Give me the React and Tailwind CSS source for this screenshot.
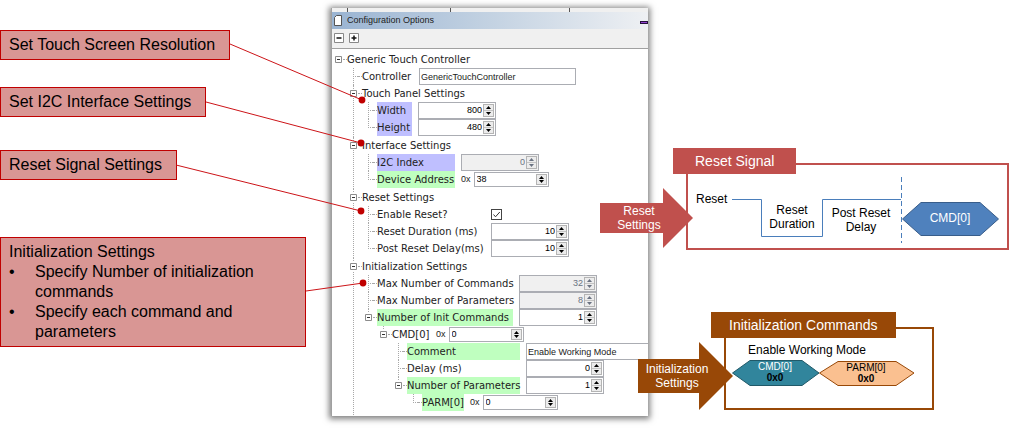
const notes = [
  { text: "Set Touch Screen Resolution", className: "" },
  { text: "Set I2C Interface Settings", className: "mt-[27px]" },
  { text: "Reset Signal Settings", className: "mt-[33px]" },
  {
    text: "Initialization Settings",
    className: "mt-[57px] max-w-[306px]",
    items: [
      "Specify Number of initialization commands",
      "Specify each command and parameters",
    ],
  },
];

const connectors = [
  { x1: 230, y1: 44, x2: 362, y2: 100 },
  { x1: 206, y1: 102, x2: 361, y2: 143 },
  { x1: 176, y1: 165, x2: 361, y2: 211 },
  { x1: 306, y1: 291, x2: 363, y2: 283 },
];

const tree = [
  {
    label: "Generic Touch Controller",
    children: [
      { label: "Controller", field: "text", value: "GenericTouchController", col: "w-[51px]" },
      {
        label: "Touch Panel Settings",
        children: [
          { label: "Width", field: "spin", value: "800", col: "w-[35px]", tone: "blue" },
          { label: "Height", field: "spin", value: "480", col: "w-[35px]", tone: "blue" },
        ],
      },
      {
        label: "Interface Settings",
        children: [
          { label: "I2C Index", field: "spin", value: "0", col: "w-[78px]", tone: "blue", disabled: true },
          { label: "Device Address", field: "hex", value: "38", col: "w-[78px]", tone: "green" },
        ],
      },
      {
        label: "Reset Settings",
        children: [
          { label: "Enable Reset?", field: "check", col: "w-[108px]" },
          { label: "Reset Duration (ms)", field: "spin", value: "10", col: "w-[108px]" },
          { label: "Post Reset Delay(ms)", field: "spin", value: "10", col: "w-[108px]" },
        ],
      },
      {
        label: "Initialization Settings",
        open: true,
        children: [
          { label: "Max Number of Commands", field: "spin", value: "32", col: "w-[136px]", disabled: true },
          { label: "Max Number of Parameters", field: "spin", value: "8", col: "w-[136px]", disabled: true },
          {
            label: "Number of Init Commands",
            field: "spin",
            value: "1",
            col: "w-[136px]",
            tone: "green",
            children: [
              {
                label: "CMD[0]",
                field: "hex",
                value: "0",
                col: "w-[38px]",
                children: [
                  { label: "Comment", field: "wide", value: "Enable Working Mode", col: "w-[113px]", tone: "green" },
                  { label: "Delay (ms)", field: "spin", value: "0", col: "w-[113px]" },
                  {
                    label: "Number of Parameters",
                    field: "spin",
                    value: "1",
                    col: "w-[113px]",
                    tone: "green",
                    children: [
                      { label: "PARM[0]", field: "hex", value: "0", col: "w-[42px]", tone: "green" },
                    ],
                  },
                ],
              },
            ],
          },
        ],
      },
    ],
  },
];

const tones = { blue: "bg-[#bfbfff]", green: "bg-[#bfffbf]" };

function Note({ text, items, className }) {
  return (
    <div
      className={`w-fit border border-[#c00000] bg-[#d99694] py-1 pl-2 pr-[14px] text-[16px] leading-5 ${className}`}
    >
      <p>{text}</p>
      {items && (
        <ul>
          {items.map((item) => (
            <li key={item} className="flex">
              <span className="w-[26px] shrink-0">•</span>
              <span>{item}</span>
            </li>
          ))}
        </ul>
      )}
    </div>
  );
}

function Connectors() {
  return (
    <svg className="pointer-events-none absolute left-0 top-0 z-10 overflow-visible" width="331" height="400" aria-hidden="true">
      {connectors.map((c) => (
        <g key={c.y1}>
          <line x1={c.x1} y1={c.y1} x2={c.x2} y2={c.y2} stroke="#cc1418" strokeWidth="1" />
          <circle cx={c.x2} cy={c.y2} r="3.4" fill="#c00000" />
        </g>
      ))}
    </svg>
  );
}

function Spinner({ id, value, disabled, hex }) {
  return (
    <span
      className={`flex shrink-0 border border-[#abadb3] p-px ${hex ? "h-[15px] w-[75px]" : "h-[17px] w-[78px]"} ${
        disabled ? "bg-[#f0f0f0] text-gray-500" : "bg-white text-black"
      }`}
    >
      <input
        id={id}
        defaultValue={value}
        disabled={disabled}
        className={`min-w-0 flex-1 bg-transparent px-px outline-none ${hex ? "text-left" : "text-right"}`}
      />
      <span className="flex w-[11px] flex-col border border-[#b4b4b4] bg-[#ececec]">
        <button type="button" disabled={disabled} aria-label="Increase" className="flex flex-1 items-center justify-center">
          <svg width="5" height="3" viewBox="0 0 5 3">
            <path d="M0 3 2.5 0 5 3z" fill="currentColor" />
          </svg>
        </button>
        <button
          type="button"
          disabled={disabled}
          aria-label="Decrease"
          className={`flex flex-1 items-center justify-center ${hex ? "" : "border-t border-[#c4c4c4]"}`}
        >
          <svg width="5" height="3" viewBox="0 0 5 3">
            <path d="M0 0h5L2.5 3z" fill="currentColor" />
          </svg>
        </button>
      </span>
    </span>
  );
}

function Field({ id, node }) {
  if (node.field === "check") {
    return (
      <span className="relative flex">
        <input
          id={id}
          type="checkbox"
          defaultChecked
          className="size-[11px] appearance-none border border-[#444] bg-white"
        />
        <svg className="pointer-events-none absolute left-0 top-0" width="11" height="11" viewBox="0 0 11 11">
          <path d="M2.5 5.5 4.5 7.8 8.8 3" fill="none" stroke="#333" />
        </svg>
      </span>
    );
  }
  if (node.field === "text" || node.field === "wide") {
    return (
      <input
        id={id}
        defaultValue={node.value}
        className={`h-[17px] border border-[#abadb3] bg-white px-px outline-none ${
          node.field === "wide" ? "min-w-0 flex-1 border-r-0" : "w-[157px]"
        }`}
      />
    );
  }
  if (node.field === "hex") {
    return (
      <span className="flex items-center gap-[3px]">
        <span>0x</span>
        <Spinner id={id} value={node.value} hex />
      </span>
    );
  }
  return <Spinner id={id} value={node.value} disabled={node.disabled} />;
}

function Toggle({ label }) {
  return (
    <button type="button" aria-label={`Collapse ${label}`} className="relative z-[1] ml-[2px] size-[9px] shrink-0 bg-white">
      <svg className="block" width="9" height="9" viewBox="0 0 9 9">
        <path d="M1.5 1.5h6v6h-6z" fill="#fff" stroke="#8c8c8c" />
        <path d="M3 4.5h3" stroke="#333" />
      </svg>
    </button>
  );
}

function TreeNode({ node, path, root, last }) {
  const id = `opt-${path}`;
  return (
    <li className="relative">
      {!root && (
        <span
          className={`absolute left-[6px] top-0 border-l border-dotted border-[#a8a8a8] ${
            last && !node.open ? "h-[9px]" : "h-full"
          }`}
        />
      )}
      <div className="flex h-[17px] items-center">
        {node.children ? (
          <Toggle label={node.label} />
        ) : (
          <span className="ml-[6px] w-[5px] shrink-0 border-t border-dotted border-[#a8a8a8]" />
        )}
        <span className="w-1 shrink-0 border-t border-dotted border-[#a8a8a8]" />
        {node.field ? (
          <label
            htmlFor={id}
            className={`mr-[6px] h-[17px] shrink-0 whitespace-nowrap text-[10px] leading-[17px] ${node.col} ${tones[node.tone] ?? ""}`}
          >
            {node.label}
          </label>
        ) : (
          <span className="whitespace-nowrap text-[10px] leading-[17px]">{node.label}</span>
        )}
        {node.field && (
          <div className="flex min-w-0 flex-1 items-center font-['Liberation_Sans',Arial,sans-serif]">
            <Field id={id} node={node} />
          </div>
        )}
      </div>
      {node.children && (
        <ul className="pb-px pl-[15px]">
          {node.children.map((child, i) => (
            <TreeNode key={child.label} node={child} path={`${path}-${i}`} last={i === node.children.length - 1} />
          ))}
        </ul>
      )}
    </li>
  );
}

function ConfigPanel() {
  return (
    <section className="mt-2 min-w-0 flex-1 self-start overflow-hidden border-l border-[#a0a0a0] bg-white font-['DejaVu_Sans',sans-serif] text-[9px] text-[#222] shadow-[0_1px_6px_2px_rgba(0,0,0,0.5)]">
      <div className="flex h-1 bg-[#f0f0f0]">
        <span className="w-4 border-r border-[#555]" />
        <span className="w-[103px] border-r border-[#555]" />
        <span className="w-[119px] border-r border-[#555]" />
      </div>
      <header className="flex h-[17px] items-center bg-linear-to-r from-[#9ab4d2] via-[#c3d2e2] to-[#eef0f3] pl-[2px]">
        <svg width="8" height="11" viewBox="0 0 8 11">
          <path d="M2.5.5h5v10h-7v-8z" fill="#fff" stroke="#555" />
        </svg>
        <h2 className="ml-[5px] flex-1 font-['Liberation_Sans',Arial,sans-serif]">Configuration Options</h2>
        <button type="button" aria-label="Minimize" className="mt-1 h-[3px] w-2 border border-[#24103a] bg-[#9040d0]" />
      </header>
      <div className="flex h-5 items-center gap-[5px] border-b border-[#a0a0a0] bg-[#f0f0f0] pb-px pl-[2px]">
        <button type="button" aria-label="Collapse all">
          <svg className="block" width="10" height="10" viewBox="0 0 10 10">
            <path d="M.5.5h9v9h-9z" fill="#fff" stroke="#888" />
            <path d="M2.5 5h5" stroke="#111" strokeWidth="1.5" />
          </svg>
        </button>
        <button type="button" aria-label="Expand all">
          <svg className="block" width="10" height="10" viewBox="0 0 10 10">
            <path d="M.5.5h9v9h-9z" fill="#fff" stroke="#888" />
            <path d="M2.5 5h5M5 2.5v5" stroke="#111" strokeWidth="1.5" />
          </svg>
        </button>
      </div>
      <ul className="pt-[2px]">
        {tree.map((node) => (
          <TreeNode key={node.label} node={node} path="0" root />
        ))}
      </ul>
    </section>
  );
}

function ResetSignal() {
  return (
    <section className="relative w-full border-2 border-[#c0504d]">
      <h2 className="absolute -left-[15px] -top-[17px] whitespace-nowrap bg-[#c0504d] px-[22px] py-[3px] text-[14px] leading-5 text-white">
        Reset Signal
      </h2>
      <svg className="block" width="319" height="83" viewBox="0 0 319 83" fontSize="12">
        <path d="M44 34.5h29.5v37H134.5v-37H213" fill="none" stroke="#4a7ebb" />
        <path d="M213.5 12v66" stroke="#4a7ebb" strokeDasharray="5 3" />
        <path d="M214.5 54 233 37.5h59L310.5 54 292 70.5h-59z" fill="#4f81bd" stroke="#385d8a" />
        <text x="8" y="38">Reset</text>
        <g textAnchor="middle">
          <text x="104" y="49">Reset</text>
          <text x="104" y="63">Duration</text>
          <text x="173" y="52">Post Reset</text>
          <text x="173" y="66">Delay</text>
          <text x="262" y="57" fill="#fff">CMD[0]</text>
        </g>
      </svg>
      <div className="absolute -left-[88px] top-[23px]">
        <svg className="block" width="93" height="60" viewBox="0 0 93 60" fontSize="12" fill="#fff" textAnchor="middle">
          <path d="M0 15h63V0l30 30-30 30V45H0z" fill="#c0504d" />
          <text x="39" y="27">Reset</text>
          <text x="39" y="41">Settings</text>
        </svg>
      </div>
    </section>
  );
}

function InitCommands() {
  return (
    <section className="relative ml-[38px] w-fit border-2 border-[#984807]">
      <h2 className="absolute -left-[15px] -top-[17px] whitespace-nowrap bg-[#984807] px-[18px] py-[3px] text-[14px] leading-5 text-white">
        Initialization Commands
      </h2>
      <svg className="block" width="206" height="79" viewBox="0 0 206 79" fontSize="10" textAnchor="middle">
        <text x="81" y="25" fontSize="12">Enable Working Mode</text>
        <path d="M6.5 44 24 31.5h52L93 44 76 56.5H24z" fill="#31859c" stroke="#215968" />
        <path d="M93.5 44 112 32.5h58L188 44 170 56.5h-58z" fill="#fac090" stroke="#984807" />
        <text x="49" y="41" fill="#fff">CMD[0]</text>
        <text x="49" y="52" fontWeight="bold">0x0</text>
        <text x="140" y="42">PARM[0]</text>
        <text x="140" y="53" fontWeight="bold">0x0</text>
      </svg>
      <div className="absolute -left-[88px] top-[13px]">
        <svg className="block" width="95" height="68" viewBox="0 0 95 68" fontSize="12" fill="#fff" textAnchor="middle">
          <path d="M0 17h61V0l34 34-34 34V51H0z" fill="#984807" />
          <text x="39" y="31">Initialization</text>
          <text x="39" y="45">Settings</text>
        </svg>
      </div>
    </section>
  );
}

export default function App() {
  return (
    <main className="flex min-h-screen overflow-hidden bg-white font-['Liberation_Sans',Arial,sans-serif] text-black">
      <aside className="relative w-[331px] shrink-0 pt-[30px]">
        {notes.map((note) => (
          <Note key={note.text} {...note} />
        ))}
        <Connectors />
      </aside>
      <ConfigPanel />
      <div className="flex w-[367px] shrink-0 flex-col gap-[77px] pl-[38px] pr-[6px] pt-[163px]">
        <ResetSignal />
        <InitCommands />
      </div>
    </main>
  );
}
